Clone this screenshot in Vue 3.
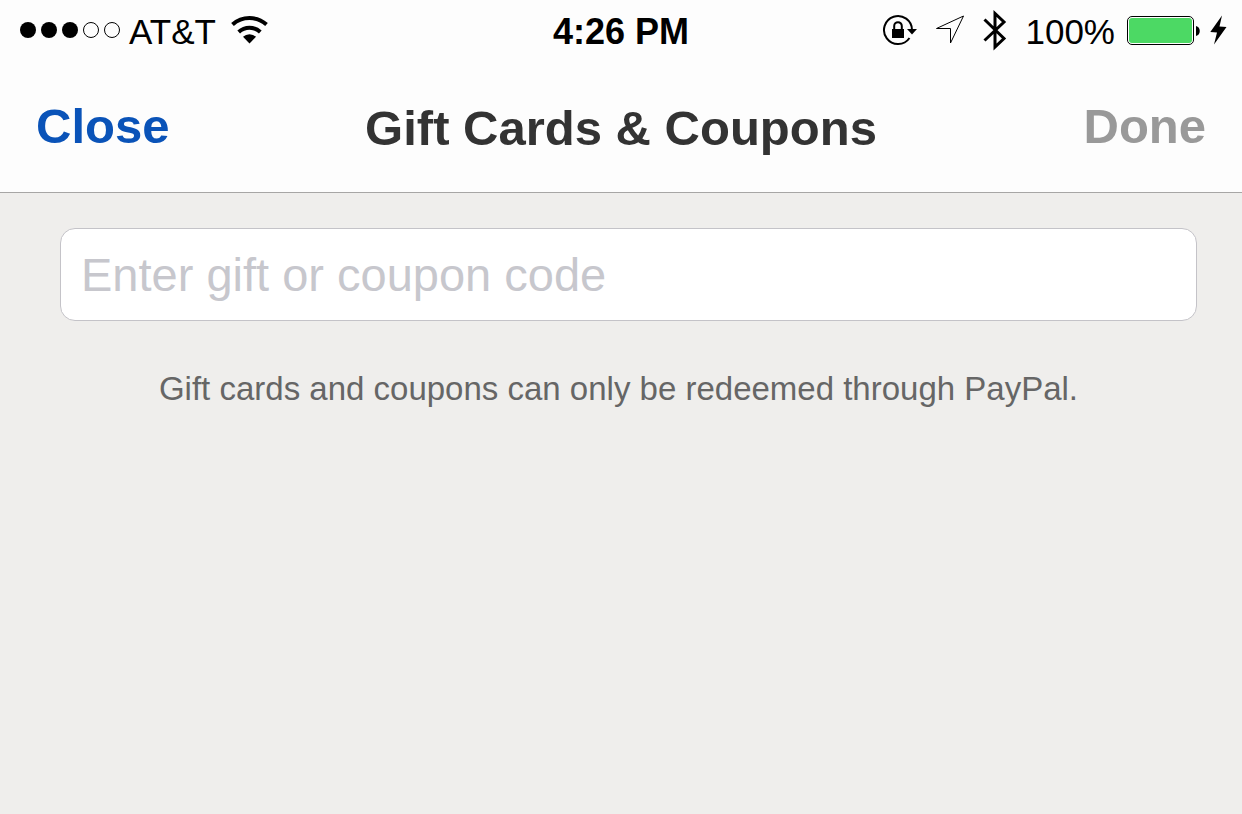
<template>
  <div class="screen">
    <div class="status-bar">
      <div class="status-left">
        <svg class="signal" width="102" height="18" viewBox="0 0 102 18" role="img" aria-label="Signal strength">
          <circle
            v-for="n in 5"
            :key="n"
            :cx="9 + (n - 1) * 21"
            cy="9"
            :r="n <= signalBars ? 8 : 7.5"
            :fill="n <= signalBars ? '#000' : 'none'"
            :stroke="n <= signalBars ? 'none' : '#000'"
          />
        </svg>
        <span class="carrier">{{ carrier }}</span>
        <svg class="wifi" width="38" height="28" viewBox="0 0 38 28" aria-hidden="true">
          <g fill="none" stroke="#000" stroke-width="4">
            <path d="M1.5 8.6 A25.5 25.5 0 0 1 35.5 8.6" />
            <path d="M7.7 16 A16 16 0 0 1 29.3 16" />
          </g>
          <path d="M12 20.7 A9.5 9.5 0 0 1 25 20.7 L18.5 27.5 Z" />
        </svg>
      </div>

      <time class="clock">{{ time }}</time>

      <div class="status-right">
        <!-- Rotation lock -->
        <svg class="rotation" width="35" height="32" viewBox="0 0 35 32" aria-hidden="true">
          <path d="M30 16 A14 14 0 1 0 27.5 24" fill="none" stroke="#000" stroke-width="2" />
          <path d="M25 15 H35 L30 20.5 Z" />
          <path d="M12.2 16 V12 A3.8 3.8 0 0 1 19.8 12 V16" fill="none" stroke="#000" stroke-width="2" />
          <rect x="10" y="15" width="12" height="9" />
        </svg>
        <!-- Location -->
        <svg class="location" width="30" height="30" viewBox="0 0 30 30" aria-hidden="true">
          <path d="M1.5 13.5 L28.5 1 L15.5 28 V13.5 Z" fill="none" stroke="#000" />
        </svg>
        <!-- Bluetooth -->
        <svg class="bluetooth" width="24" height="42" viewBox="0 0 24 42" aria-hidden="true">
          <path d="M1.5 10.5 L21 29.5 L12 38 V4.5 L21 13 L1.5 31.5" fill="none" stroke="#000" stroke-width="3" />
        </svg>
        <span class="percent">{{ battery }}%</span>
        <svg class="battery" width="74" height="30" viewBox="0 0 74 30" aria-hidden="true">
          <rect x="0.5" y="1.5" width="66" height="28" rx="4.5" fill="#fff" stroke="#000" />
          <rect x="2" y="3" :width="63 * battery / 100" height="25" rx="3" fill="#4cd964" />
          <path d="M69 11 C74 12 74 20 69 21 Z" />
        </svg>
        <svg class="bolt" width="17" height="30" viewBox="0 0 17 30" aria-hidden="true">
          <path d="M12 0.5 L9.5 11.5 L16.5 12 L4 29.5 L7 17.5 L0.3 17 Z" />
        </svg>
      </div>
    </div>

    <header class="nav-bar">
      <button type="button" class="nav-button close">Close</button>
      <h1 class="nav-title">Gift Cards &amp; Coupons</h1>
      <button type="button" class="nav-button done" :disabled="!code">Done</button>
    </header>

    <main class="content">
      <input
        v-model="code"
        class="code-input"
        type="text"
        placeholder="Enter gift or coupon code"
        aria-label="Gift or coupon code"
      />
      <p class="note">Gift cards and coupons can only be redeemed through PayPal.</p>
    </main>
  </div>
</template>

<script setup>
import { ref } from 'vue'

const carrier = 'AT&T'
const time = '4:26 PM'
const signalBars = 3
const battery = 100

const code = ref('')
</script>

<style>
body {
  margin: 0;
  background: #efeeec;
}
</style>

<style scoped>
.screen {
  min-height: 100vh;
  background: #efeeec;
  font-family: "Liberation Sans", Arial, sans-serif;
}

.status-bar {
  display: grid;
  grid-template-columns: 1fr auto 1fr;
  align-items: center;
  height: 60px;
  padding: 0 15px;
  background: #fdfdfd;
  color: #000;
  font-size: 36px;
  line-height: 40px;
}

.status-bar svg {
  flex: none;
}

.status-left,
.status-right {
  display: flex;
  align-items: center;
}

.signal {
  margin-left: 4px;
}

.carrier,
.percent,
.clock {
  padding-top: 4px;
}

.carrier,
.percent {
  font-size: 35px;
}

.carrier {
  margin: 0 15px 0 8px;
}

.clock {
  font-weight: bold;
}

.status-right {
  justify-content: flex-end;
}

.location,
.bluetooth {
  margin-left: 18px;
}

.percent {
  margin: 0 12px 0 18px;
}

.bolt {
  margin-left: 9px;
}

.nav-bar {
  display: grid;
  grid-template-columns: 1fr auto 1fr;
  align-items: center;
  height: 132px;
  padding: 0 36px;
  background: #fdfdfd;
  border-bottom: 1px solid #a7a6a5;
}

.nav-title {
  margin: 0;
  padding-top: 4px;
  color: #333;
  font-size: 49px;
  font-weight: bold;
  line-height: 60px;
}

.nav-button {
  padding: 0;
  border: 0;
  background: none;
  font-family: inherit;
  font-size: 49px;
  font-weight: bold;
  line-height: 60px;
  cursor: pointer;
}

.close {
  justify-self: start;
  color: #0a53b8;
}

.done {
  justify-self: end;
  color: #0a53b8;
}

.done:disabled {
  color: #999;
  cursor: default;
}

.content {
  padding: 35px 45px 0 60px;
}

.code-input {
  display: block;
  box-sizing: border-box;
  width: 100%;
  height: 93px;
  padding: 0 20px;
  border: 1px solid #c4c3c8;
  border-radius: 15px;
  outline: none;
  background: #fff;
  color: #333;
  font-family: inherit;
  font-size: 47px;
}

.code-input::placeholder {
  color: #c7c7cd;
  opacity: 1;
}

.note {
  margin: 48px 20px 0 0;
  color: #666;
  font-size: 33px;
  line-height: 40px;
  text-align: center;
}
</style>
